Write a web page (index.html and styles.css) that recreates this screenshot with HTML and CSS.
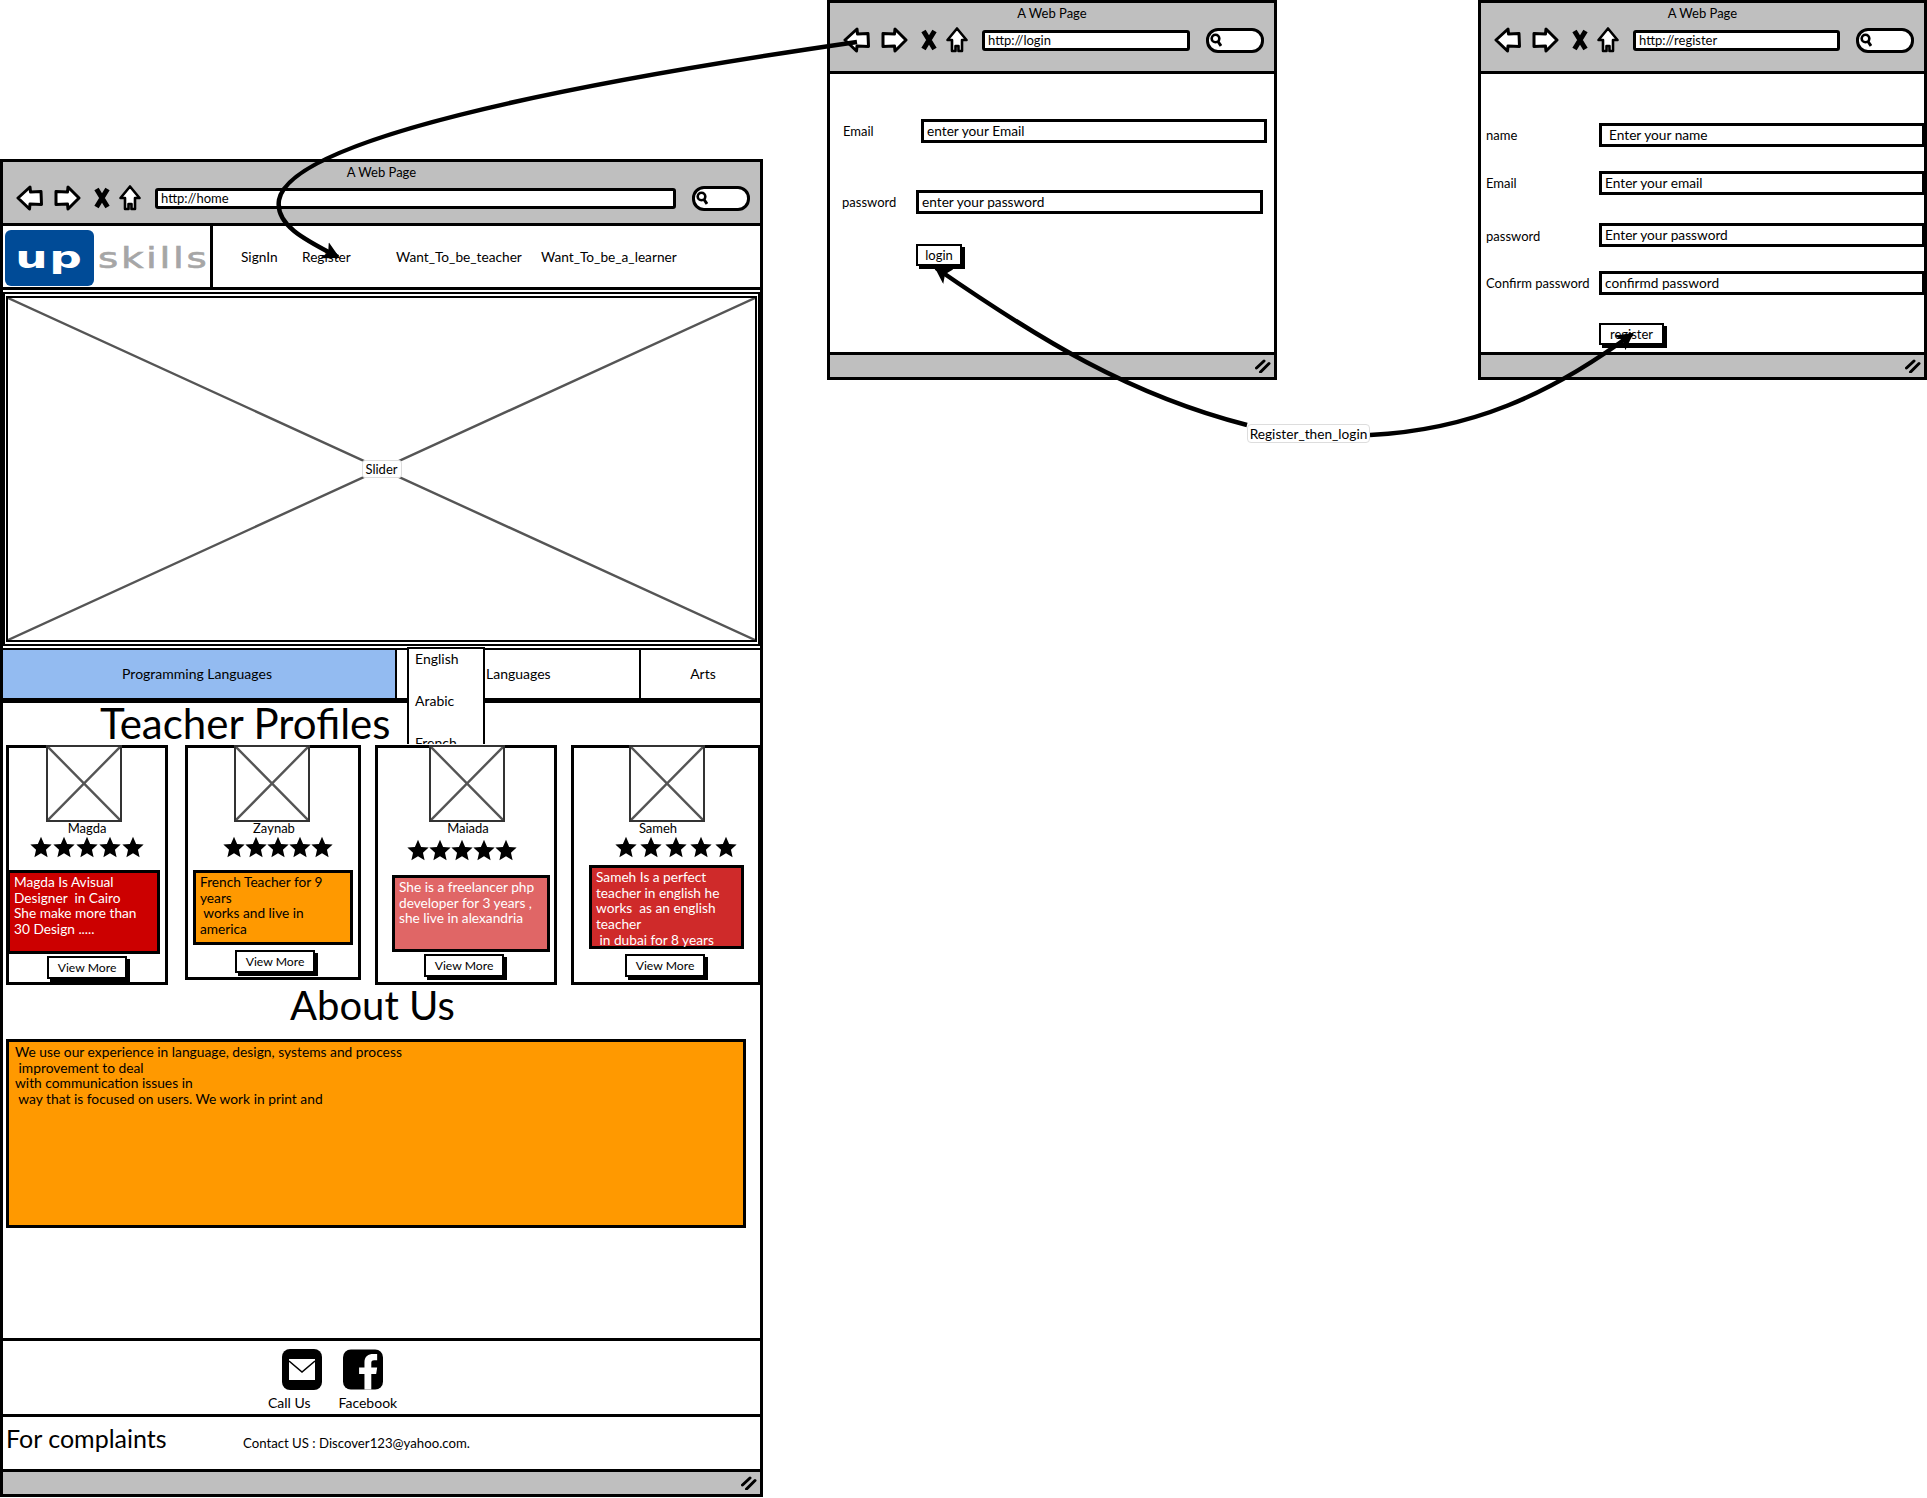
FILE: index.html
```html
<!DOCTYPE html>
<html lang="en">
<head>
    <meta charset="UTF-8">
    <meta name="viewport" content="width=device-width, initial-scale=1.0">
    <title>Upskills wireframe</title>
    <link rel="stylesheet" href="styles.css">
</head>
<body>
    <!-- Shared icons -->
    <svg class="sprite" width="0" height="0">
        <symbol id="icon-back" viewBox="0 0 27 26">
            <path d="M2 13 L14 2 L14.5 7 L25 6.5 L25.5 19.5 L14 19 L13.5 24 Z" fill="#fff" stroke="#000" stroke-width="3" stroke-linejoin="round"/>
        </symbol>
        <symbol id="icon-forward" viewBox="0 0 27 26">
            <path d="M25 13 L14 2 L13.5 7 L2 6.5 L2 19.5 L13.5 19 L14 24 Z" fill="#fff" stroke="#000" stroke-width="3" stroke-linejoin="round"/>
        </symbol>
        <symbol id="icon-stop" viewBox="0 0 18 22">
            <path d="M3.5 2 L14.5 20 M14.5 2 L3.5 20" fill="none" stroke="#000" stroke-width="5"/>
        </symbol>
        <symbol id="icon-home" viewBox="0 0 22 26">
            <path d="M11 1.5 L20.5 13 L16 13 L16 24 L12.5 24 L12.5 19 L9.5 19 L9.5 24 L6 24 L6 13 L1.5 13 Z" fill="#fff" stroke="#000" stroke-width="2.6" stroke-linejoin="round"/>
        </symbol>
        <symbol id="icon-lens" viewBox="0 0 12 14">
            <circle cx="5.5" cy="5.5" r="3.8" fill="none" stroke="#000" stroke-width="2.6"/>
            <path d="M8 8.5 L11 13" stroke="#000" stroke-width="3"/>
        </symbol>
        <symbol id="icon-grip" viewBox="0 0 16 14">
            <path d="M1.5 9 L9 2 M5.5 13 L14 4.5" stroke="#000" stroke-width="3" stroke-linecap="round"/>
        </symbol>
        <symbol id="icon-star" viewBox="0 0 24 24">
            <path d="M12 .8 L15.4 8.6 L23.6 9.3 L17.4 14.9 L19.2 23.2 L12 18.9 L4.8 23.2 L6.6 14.9 L.4 9.3 L8.6 8.6 Z" fill="#000"/>
        </symbol>
        <symbol id="icon-cross" viewBox="0 0 100 100" preserveAspectRatio="none">
            <path d="M0 0 L100 100 M100 0 L0 100" stroke="#555" stroke-width="2.4" vector-effect="non-scaling-stroke"/>
        </symbol>
    </svg>

    <!-- Home page window -->
    <section class="window window-home">
        <header class="chrome">
            <div class="chrome-title">A Web Page</div>
            <div class="toolbar">
                <svg class="tool tool-arrow"><use href="#icon-back"/></svg>
                <svg class="tool tool-arrow"><use href="#icon-forward"/></svg>
                <svg class="tool tool-stop"><use href="#icon-stop"/></svg>
                <svg class="tool tool-house"><use href="#icon-home"/></svg>
                <div class="url">http://home</div>
                <div class="search"><svg class="lens"><use href="#icon-lens"/></svg></div>
            </div>
        </header>

        <nav class="site-nav">
            <div class="logo">
                <div class="logo-mark"><span class="logo-up">up</span></div>
                <span class="logo-skills">skills</span>
            </div>
            <div class="nav-links">
                <span>SignIn</span>
                <span>Register</span>
                <span>Want_To_be_teacher</span>
                <span>Want_To_be_a_learner</span>
            </div>
        </nav>

        <div class="slider-frame">
            <div class="slider">
                <svg class="cross"><use href="#icon-cross"/></svg>
                <span class="slider-label">Slider</span>
            </div>
        </div>

        <div class="tabs">
            <div class="tab tab-active">Programming Languages</div>
            <div class="tab tab-languages">Languages</div>
            <div class="tab tab-arts">Arts</div>
            <ul class="dropdown">
                <li>English</li>
                <li>Arabic</li>
                <li>French</li>
            </ul>
        </div>

        <h2 class="heading-teachers">Teacher Profiles</h2>

        <div class="cards">
            <article class="card card-magda">
                <div class="photo"><svg class="cross"><use href="#icon-cross"/></svg></div>
                <div class="card-name">Magda</div>
                <div class="stars">
                    <svg class="star"><use href="#icon-star"/></svg>
                    <svg class="star"><use href="#icon-star"/></svg>
                    <svg class="star"><use href="#icon-star"/></svg>
                    <svg class="star"><use href="#icon-star"/></svg>
                    <svg class="star"><use href="#icon-star"/></svg>
                </div>
                <p class="bio">Magda Is Avisual<br>Designer&nbsp; in Cairo<br>She make more than<br>30 Design .....</p>
                <div class="button view-more">View More</div>
            </article>
            <article class="card card-zaynab">
                <div class="photo"><svg class="cross"><use href="#icon-cross"/></svg></div>
                <div class="card-name">Zaynab</div>
                <div class="stars">
                    <svg class="star"><use href="#icon-star"/></svg>
                    <svg class="star"><use href="#icon-star"/></svg>
                    <svg class="star"><use href="#icon-star"/></svg>
                    <svg class="star"><use href="#icon-star"/></svg>
                    <svg class="star"><use href="#icon-star"/></svg>
                </div>
                <p class="bio">French Teacher for 9<br>years<br>&nbsp;works and live in<br>america</p>
                <div class="button view-more">View More</div>
            </article>
            <article class="card card-maiada">
                <div class="photo"><svg class="cross"><use href="#icon-cross"/></svg></div>
                <div class="card-name">Maiada</div>
                <div class="stars">
                    <svg class="star"><use href="#icon-star"/></svg>
                    <svg class="star"><use href="#icon-star"/></svg>
                    <svg class="star"><use href="#icon-star"/></svg>
                    <svg class="star"><use href="#icon-star"/></svg>
                    <svg class="star"><use href="#icon-star"/></svg>
                </div>
                <p class="bio">She is a freelancer php<br>developer for 3 years ,<br>she live in alexandria</p>
                <div class="button view-more">View More</div>
            </article>
            <article class="card card-sameh">
                <div class="photo"><svg class="cross"><use href="#icon-cross"/></svg></div>
                <div class="card-name">Sameh</div>
                <div class="stars">
                    <svg class="star"><use href="#icon-star"/></svg>
                    <svg class="star"><use href="#icon-star"/></svg>
                    <svg class="star"><use href="#icon-star"/></svg>
                    <svg class="star"><use href="#icon-star"/></svg>
                    <svg class="star"><use href="#icon-star"/></svg>
                </div>
                <p class="bio">Sameh Is a perfect<br>teacher in english he<br>works&nbsp; as an english<br>teacher<br>&nbsp;in dubai for 8 years</p>
                <div class="button view-more">View More</div>
            </article>
        </div>

        <h2 class="heading-about">About Us</h2>
        <p class="about-box">We use our experience in language, design, systems and process<br>&nbsp;improvement to deal<br>with communication issues in<br>&nbsp;way that is focused on users. We work in print and</p>

        <div class="spacer"></div>

        <div class="contact">
            <div class="contact-icons">
                <svg class="social" viewBox="0 0 40 41">
                    <rect width="40" height="41" rx="8" fill="#000"/>
                    <path d="M7 10 H33 V31 H7 Z" fill="#fff"/>
                    <path d="M7 12 L20 23 L33 12" fill="none" stroke="#000" stroke-width="1.6"/>
                </svg>
                <svg class="social" viewBox="0 0 41 41">
                    <rect width="41" height="41" rx="8" fill="#000"/>
                    <path d="M22 41 V25 H16.5 V18.5 H22 V13 C22 7 26 4.5 31 4.5 H35 V11 H32 C29.5 11 29 12 29 14 V18.5 H35 L34 25 H29 V41 Z" fill="#fff"/>
                </svg>
            </div>
            <div class="contact-labels">
                <span>Call Us</span>
                <span>Facebook</span>
            </div>
        </div>

        <div class="complaints">
            <h3 class="complaints-title">For complaints</h3>
            <span class="complaints-mail">Contact US : Discover123@yahoo.com.</span>
        </div>

        <footer class="status"><svg class="grip"><use href="#icon-grip"/></svg></footer>
    </section>

    <!-- Login window -->
    <section class="window window-login">
        <header class="chrome">
            <div class="chrome-title">A Web Page</div>
            <div class="toolbar">
                <svg class="tool tool-arrow"><use href="#icon-back"/></svg>
                <svg class="tool tool-arrow"><use href="#icon-forward"/></svg>
                <svg class="tool tool-stop"><use href="#icon-stop"/></svg>
                <svg class="tool tool-house"><use href="#icon-home"/></svg>
                <div class="url">http://login</div>
                <div class="search"><svg class="lens"><use href="#icon-lens"/></svg></div>
            </div>
        </header>
        <form class="login-form">
            <div class="login-row login-email">
                <label>Email</label>
                <div class="field">enter your Email</div>
            </div>
            <div class="login-row login-password">
                <label>password</label>
                <div class="field">enter your password</div>
            </div>
            <div class="button login-button">login</div>
        </form>
        <footer class="status"><svg class="grip"><use href="#icon-grip"/></svg></footer>
    </section>

    <!-- Register window -->
    <section class="window window-register">
        <header class="chrome">
            <div class="chrome-title">A Web Page</div>
            <div class="toolbar">
                <svg class="tool tool-arrow"><use href="#icon-back"/></svg>
                <svg class="tool tool-arrow"><use href="#icon-forward"/></svg>
                <svg class="tool tool-stop"><use href="#icon-stop"/></svg>
                <svg class="tool tool-house"><use href="#icon-home"/></svg>
                <div class="url">http://register</div>
                <div class="search"><svg class="lens"><use href="#icon-lens"/></svg></div>
            </div>
        </header>
        <form class="register-form">
            <label>name</label>
            <div class="field field-name">Enter your name</div>
            <label>Email</label>
            <div class="field">Enter your email</div>
            <label class="row-low">password</label>
            <div class="field row-low">Enter your password</div>
            <label>Confirm password</label>
            <div class="field">confirmd password</div>
            <div class="button register-button">register</div>
        </form>
        <footer class="status"><svg class="grip"><use href="#icon-grip"/></svg></footer>
    </section>

    <!-- Links between the pages -->
    <svg class="links" viewBox="0 0 1927 1498">
        <defs>
            <marker id="arrow-head" markerUnits="userSpaceOnUse" markerWidth="20" markerHeight="20" refX="15" refY="9" orient="auto">
                <path d="M0 0 L17 9 L0 18 L4 9 Z" fill="#000"/>
            </marker>
        </defs>
        <path class="link" d="M857 42 C560 85 290 140 279 200 C275 225 305 240 338 257"/>
        <path class="link" d="M1370 435 C1470 430 1550 395 1632 334"/>
        <path class="link" d="M1247 425 C1130 395 1040 340 936 268"/>
    </svg>
    <div class="link-label">Register_then_login</div>
</body>
</html>
```

FILE: styles.css
```css
body {
    margin: 0;
    width: 1927px;
    height: 1498px;
    position: relative;
    overflow: hidden;
    background: #fff;
    color: #000;
    font-family: Lato, "Open Sans", sans-serif;
    font-size: 13px;
}
.sprite {
    position: absolute;
}

/* Windows */
.window {
    position: absolute;
    box-sizing: border-box;
    display: flex;
    flex-direction: column;
    border: 3px solid #000;
    background: #fff;
}
.window-home {
    left: 0;
    top: 159px;
    width: 763px;
    height: 1338px;
}
.window-login {
    left: 827px;
    top: 0;
    width: 450px;
    height: 380px;
}
.window-register {
    left: 1478px;
    top: 0;
    width: 449px;
    height: 380px;
}

/* Browser chrome */
.chrome {
    box-sizing: border-box;
    height: 71px;
    flex: none;
    padding: 0 10px 0 13px;
    background: #bfbfbf;
    border-bottom: 3px solid #000;
}
.window-home .chrome {
    height: 64px;
}
.chrome-title {
    height: 20px;
    line-height: 20px;
    text-align: center;
    padding-right: 3px;
}
.toolbar {
    display: flex;
    align-items: center;
    height: 26px;
    margin-top: 4px;
}
.window-home .toolbar {
    margin-top: 3px;
}
.tool {
    display: block;
    flex: none;
}
.tool-arrow {
    width: 27px;
    height: 26px;
    margin-right: 11px;
}
.tool-stop {
    width: 18px;
    height: 22px;
    margin: 0 8px 0 1px;
}
.tool-house {
    width: 22px;
    height: 26px;
    margin-right: 14px;
}
.url {
    flex: 1;
    box-sizing: border-box;
    height: 21px;
    line-height: 15px;
    padding-left: 3px;
    background: #fff;
    border: 3px solid #000;
    border-radius: 3px;
}
.search {
    box-sizing: border-box;
    display: flex;
    align-items: center;
    width: 58px;
    height: 25px;
    margin-left: 16px;
    padding-left: 1px;
    background: #fff;
    border: 3px solid #000;
    border-radius: 12px;
}
.lens {
    width: 12px;
    height: 14px;
}
.status {
    box-sizing: border-box;
    height: 25px;
    flex: none;
    display: flex;
    align-items: center;
    justify-content: flex-end;
    padding-right: 3px;
    background: #bfbfbf;
    border-top: 3px solid #000;
}
.grip {
    width: 16px;
    height: 14px;
}

/* Top navigation */
.site-nav {
    box-sizing: border-box;
    height: 64px;
    flex: none;
    display: flex;
    border-bottom: 3px solid #000;
}
.logo {
    box-sizing: border-box;
    width: 210px;
    flex: none;
    display: flex;
    align-items: center;
    padding: 2px 0 0 2px;
    border-right: 3px solid #000;
    overflow: hidden;
}
.logo-mark {
    width: 89px;
    height: 56px;
    flex: none;
    display: flex;
    justify-content: center;
    align-items: center;
    background: #004b97;
    border-radius: 6px;
}
.logo-up {
    color: #fff;
    font-family: "DejaVu Sans", sans-serif;
    font-weight: 700;
    font-size: 30px;
    letter-spacing: 1px;
    line-height: 1;
    transform: scaleX(1.52);
}
.logo-skills {
    margin-left: 4px;
    padding-top: 1px;
    color: #a6a6a6;
    font-family: "DejaVu Sans", sans-serif;
    font-size: 29px;
    letter-spacing: 2px;
    line-height: 1;
    transform: scaleX(1.34);
    transform-origin: left center;
    -webkit-text-stroke: 0.6px #a6a6a6;
}
.nav-links {
    display: grid;
    grid-template-columns: 61px 94px 145px auto;
    align-items: center;
    padding-left: 28px;
    font-size: 13.7px;
}

/* Slider placeholder */
.slider-frame {
    box-sizing: border-box;
    height: 354px;
    margin-top: 2px;
    flex: none;
    padding: 2px 1px;
    border: 2px solid #000;
}
.slider {
    box-sizing: border-box;
    height: 100%;
    position: relative;
    border: 2px solid #000;
}
.cross {
    display: block;
    width: 100%;
    height: 100%;
}
.slider-label {
    position: absolute;
    left: 50%;
    top: 50%;
    transform: translate(-50%, -50%);
    padding: 0 3px;
    background: #fff;
    border: 1px solid #ddd;
    border-radius: 3px;
}

/* Tabs */
.tabs {
    box-sizing: border-box;
    height: 55px;
    margin-top: 2px;
    flex: none;
    display: flex;
    position: relative;
    border-top: 2px solid #000;
    border-bottom: 5px solid #000;
    font-size: 14px;
}
.tab {
    display: flex;
    align-items: center;
    justify-content: center;
    padding-bottom: 2px;
}
.tab-active {
    width: 394px;
    padding-right: 4px;
    box-sizing: border-box;
    background: #93bbf1;
    border-right: 2px solid #000;
}
.tab-languages {
    box-sizing: border-box;
    width: 244px;
    justify-content: flex-start;
    padding-left: 89px;
    border-right: 2px solid #000;
}
.tab-arts {
    flex: 1;
    padding-left: 5px;
}
.dropdown {
    position: absolute;
    left: 404px;
    top: -3px;
    z-index: 1;
    box-sizing: border-box;
    width: 78px;
    height: 97px;
    margin: 0;
    padding: 0 0 0 6px;
    list-style: none;
    overflow: hidden;
    background: #fff;
    border: 2px solid #000;
    border-bottom: 0;
}
.dropdown li {
    height: 42px;
    line-height: 20px;
}

/* Teacher cards */
.heading-teachers {
    height: 42px;
    flex: none;
    margin: 0;
    padding-left: 97px;
    font-size: 42px;
    font-weight: 400;
    line-height: 40px;
}
.cards {
    display: flex;
    height: 240px;
    flex: none;
    position: relative;
    z-index: 2;
    padding-left: 3px;
}
.card {
    box-sizing: border-box;
    flex: none;
    height: 240px;
    display: flex;
    flex-direction: column;
    align-items: flex-start;
    background: #fff;
    border: 3px solid #000;
}
.card-magda {
    width: 162px;
    --photo-x: 37px; --name-x: 38px; --stars-x: 21px; --star-gap: 1px;
    --box-x: -2px; --box-w: 153px; --box-h: 84px; --box-top: 11px;
    --box-bg: #cc0000; --box-fg: #fff;
    --btn-x: 38px; --btn-top: 2px;
}
.card-zaynab {
    width: 176px;
    height: 235px;
    margin-left: 17px;
    --photo-x: 46px; --name-x: 46px; --stars-x: 35px; --star-gap: 0px;
    --box-x: 5px; --box-w: 160px; --box-h: 75px; --box-top: 11px;
    --box-bg: #ff9900; --box-fg: #000;
    --btn-x: 47px; --btn-top: 5px;
}
.card-maiada {
    width: 182px;
    margin-left: 14px;
    --photo-x: 51px; --name-x: 50px; --stars-x: 29px; --star-gap: 0px; --stars-top: 3px;
    --box-x: 14px; --box-w: 158px; --box-h: 77px; --box-top: 13px;
    --box-bg: #e06666; --box-fg: #fff;
    --btn-x: 46px; --btn-top: 2px;
}
.card-sameh {
    width: 190px;
    margin-left: 14px;
    --photo-x: 55px; --name-x: 44px; --stars-x: 41px; --star-gap: 3px;
    --box-x: 15px; --box-w: 155px; --box-h: 84px; --box-top: 6px;
    --box-bg: #cf2a2a; --box-fg: #fff;
    --btn-x: 51px; --btn-top: 5px;
}
.photo {
    box-sizing: border-box;
    width: 76px;
    height: 77px;
    flex: none;
    margin: -3px 0 0 var(--photo-x);
    background: #fff;
    border: 2px solid #333;
}
.card-name {
    width: 80px;
    height: 14px;
    flex: none;
    margin: -1px 0 0 var(--name-x);
    line-height: 14px;
    text-align: center;
}
.stars {
    display: flex;
    gap: var(--star-gap);
    height: 24px;
    flex: none;
    margin: var(--stars-top, 0) 0 0 var(--stars-x);
}
.star {
    width: 22px;
    height: 24px;
    flex: none;
}
.bio {
    box-sizing: border-box;
    width: var(--box-w);
    height: var(--box-h);
    flex: none;
    margin: var(--box-top) 0 0 var(--box-x);
    padding: 1px 0 0 4px;
    background: var(--box-bg);
    color: var(--box-fg);
    border: 3px solid #000;
    font-size: 13.7px;
    line-height: 15.7px;
}
.button {
    box-sizing: border-box;
    display: flex;
    align-items: center;
    justify-content: center;
    background: #fff;
    border: 2px solid #000;
    box-shadow: 3px 3px 0 #000;
    flex: none;
}
.view-more {
    width: 80px;
    height: 23px;
    margin: var(--btn-top) 0 0 var(--btn-x);
    font-size: 12.2px;
}

/* About */
.heading-about {
    height: 54px;
    flex: none;
    margin: 0;
    padding-left: 287px;
    font-size: 40px;
    font-weight: 400;
    line-height: 40px;
}
.about-box {
    box-sizing: border-box;
    width: 740px;
    height: 189px;
    flex: none;
    margin: 0 0 0 3px;
    padding: 2px 0 0 6px;
    background: #ff9900;
    border: 3px solid #000;
    font-size: 13.8px;
    line-height: 15.7px;
}
.spacer {
    flex: 1;
}

/* Footer rows */
.contact {
    box-sizing: border-box;
    height: 79px;
    flex: none;
    padding-top: 8px;
    border-top: 3px solid #000;
    border-bottom: 3px solid #000;
}
.contact-icons {
    display: flex;
    gap: 21px;
    padding-left: 279px;
}
.social {
    width: 40px;
    height: 41px;
    flex: none;
}
.contact-labels {
    display: flex;
    gap: 28px;
    padding: 5px 0 0 265px;
    font-size: 14px;
    line-height: 16px;
}
.complaints {
    height: 52px;
    flex: none;
    display: flex;
    align-items: flex-start;
}
.complaints-title {
    width: 240px;
    flex: none;
    margin: 6px 0 0;
    padding-left: 3px;
    font-size: 25px;
    font-weight: 400;
    line-height: 30px;
    box-sizing: border-box;
}
.complaints-mail {
    margin-top: 18px;
    font-size: 13.2px;
    line-height: 16px;
}

/* Forms */
.field {
    box-sizing: border-box;
    height: 24px;
    line-height: 18px;
    padding-left: 3px;
    background: #fff;
    border: 3px solid #000;
    font-size: 13.7px;
}
.login-form {
    flex: 1;
    padding: 45px 0 0 13px;
}
.login-row {
    display: flex;
    align-items: center;
}
.login-row label {
    flex: none;
}
.login-email label {
    width: 78px;
}
.login-email .field {
    width: 346px;
}
.login-password {
    margin: 47px 0 0 -1px;
}
.login-password label {
    width: 74px;
}
.login-password .field {
    width: 347px;
}
.login-button {
    width: 46px;
    height: 22px;
    margin: 30px 0 0 73px;
}
.register-form {
    flex: 1;
    display: grid;
    grid-template-columns: 113px 326px;
    grid-template-rows: 24px 24px 28px 24px auto;
    row-gap: 24px;
    align-items: center;
    align-content: start;
    padding: 49px 0 0 5px;
}
.register-form label {
    white-space: nowrap;
}
.row-low {
    align-self: end;
}
label.row-low {
    line-height: 22px;
}
.field-name {
    padding-left: 7px;
}
.register-button {
    grid-column: 2;
    width: 65px;
    height: 22px;
    margin-top: 4px;
}

/* Links drawn over everything */
.links {
    position: absolute;
    left: 0;
    top: 0;
    width: 1927px;
    height: 1498px;
    z-index: 5;
    pointer-events: none;
}
.link {
    fill: none;
    stroke: #000;
    stroke-width: 4.5;
    marker-end: url(#arrow-head);
}
.link-label {
    position: absolute;
    left: 1247px;
    top: 424px;
    z-index: 6;
    box-sizing: border-box;
    width: 123px;
    height: 19px;
    line-height: 17px;
    text-align: center;
    background: #fff;
    border: 1px solid #ddd;
    border-radius: 4px;
    font-size: 13.7px;
}
```
